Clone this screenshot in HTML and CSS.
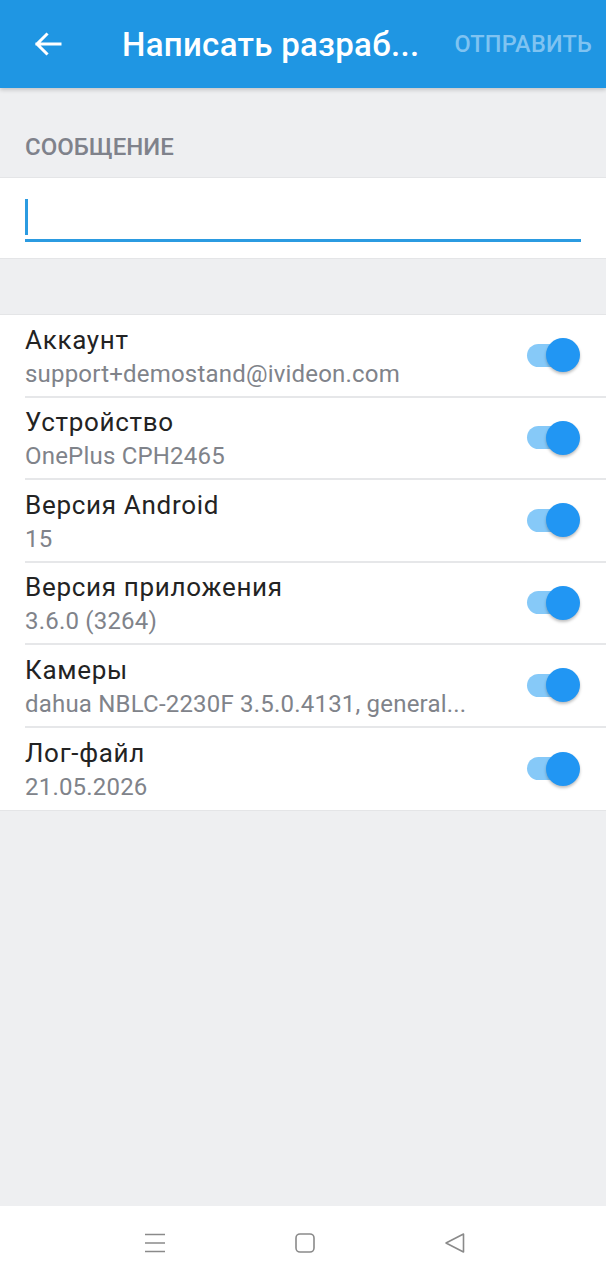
FILE: index.html
```html
<!DOCTYPE html>
<html lang="ru">
<head>
  <meta charset="UTF-8">
  <title>Написать разработчикам</title>
  <link rel="stylesheet" href="styles.css">
</head>
<body>

<div class="screen">
  <div class="toolbar">
    <a class="back" href="#">
      <svg width="28" height="24" viewBox="0 0 28 24">
        <path d="M26 12H3M12.5 2.5L3 12l9.5 9.5" fill="none" stroke="#fff" stroke-width="3" stroke-linecap="square"/>
      </svg>
    </a>
    <div class="title">Написать разраб...</div>
    <a class="send" href="#">ОТПРАВИТЬ</a>
  </div>

  <div class="section-label">СООБЩЕНИЕ</div>

  <div class="message">
    <div class="field">
      <span class="caret"></span>
    </div>
  </div>

  <ul class="options">
    <li>
      <div class="text">
        <div class="name">Аккаунт</div>
        <div class="value">support+demostand@ivideon.com</div>
      </div>
      <span class="switch"></span>
    </li>
    <li>
      <div class="text">
        <div class="name">Устройство</div>
        <div class="value">OnePlus CPH2465</div>
      </div>
      <span class="switch"></span>
    </li>
    <li>
      <div class="text">
        <div class="name">Версия Android</div>
        <div class="value">15</div>
      </div>
      <span class="switch"></span>
    </li>
    <li>
      <div class="text">
        <div class="name">Версия приложения</div>
        <div class="value">3.6.0 (3264)</div>
      </div>
      <span class="switch"></span>
    </li>
    <li>
      <div class="text">
        <div class="name">Камеры</div>
        <div class="value">dahua NBLC-2230F 3.5.0.4131, general...</div>
      </div>
      <span class="switch"></span>
    </li>
    <li>
      <div class="text">
        <div class="name">Лог-файл</div>
        <div class="value">21.05.2026</div>
      </div>
      <span class="switch"></span>
    </li>
  </ul>

  <div class="filler"></div>

  <div class="navbar">
    <svg width="20" height="20" viewBox="0 0 20 20">
      <path d="M0 1.5h20M0 10h20M0 18.5h20" stroke="#8a8a8a" stroke-width="1.6" fill="none"/>
    </svg>
    <svg width="20" height="20" viewBox="0 0 20 20">
      <rect x="1" y="1" width="18" height="18" rx="4" stroke="#8a8a8a" stroke-width="1.6" fill="none"/>
    </svg>
    <svg width="20" height="20" viewBox="0 0 20 20">
      <path d="M18.5 1v18L1 10z" stroke="#8a8a8a" stroke-width="1.6" stroke-linejoin="round" fill="none"/>
    </svg>
  </div>
</div>

</body>
</html>
```

FILE: styles.css
```css
* {
  margin: 0;
  padding: 0;
  list-style: none;
  box-sizing: border-box;
}

body {
  font-family: Roboto, "Noto Sans", sans-serif;
  background-color: #eeeff1;
}

.screen {
  width: 606px;
  height: 1280px;
  display: flex;
  flex-direction: column;
}

/*顶部栏*/
.toolbar {
  height: 88px;
  background-color: #1f96e3;
  display: flex;
  align-items: center;
  box-shadow: 0 2px 4px rgba(0, 0, 0, 0.18);
  position: relative;
  z-index: 1;
}

.toolbar .back {
  display: block;
  width: 28px;
  height: 24px;
  margin-left: 34px;
  margin-right: 60px;
}

.toolbar .back svg {
  display: block;
}

.toolbar .title {
  flex: 1;
  color: #fff;
  font-size: 33px;
  font-weight: 500;
  letter-spacing: 0.3px;
  white-space: nowrap;
}

.toolbar .send {
  color: #7fc3f1;
  font-size: 23.5px;
  font-weight: 500;
  letter-spacing: 0.2px;
  text-decoration: none;
  margin-right: 14px;
}

.section-label {
  height: 89px;
  padding: 44px 25px 0;
  color: #7f828b;
  font-size: 24px;
  font-weight: 500;
  line-height: 30px;
}

/*输入框*/
.message {
  height: 82px;
  background-color: #fff;
  border-top: 1px solid #e4e5e7;
  border-bottom: 1px solid #e4e5e7;
  padding: 21px 25px 0;
}

.field {
  height: 43px;
  border-bottom: 3px solid #2b9be1;
}

.caret {
  display: block;
  width: 3px;
  height: 36px;
  background-color: #2b9be1;
}

.options {
  margin-top: 55px;
  background-color: #fff;
  border-top: 1px solid #e4e5e7;
  border-bottom: 1px solid #e4e5e7;
}

.options li {
  height: 82.5px;
  margin-left: 25px;
  padding: 9px 26px 5px 0;
  display: flex;
  align-items: center;
  border-bottom: 2px solid #e6e7e9;
}

.options li:last-child {
  border-bottom: none;
}

.options .text {
  flex: 1;
  min-width: 0;
}

.options .name {
  color: #232323;
  font-size: 26px;
  letter-spacing: 0.7px;
  line-height: 34px;
}

.options .value {
  color: #80838a;
  font-size: 24px;
  letter-spacing: 0.2px;
  line-height: 35px;
  white-space: nowrap;
}

/*开关*/
.switch {
  width: 53px;
  height: 34px;
  position: relative;
  margin-top: -4px;
}

.switch::before {
  content: "";
  position: absolute;
  left: 0;
  top: 5.5px;
  width: 46px;
  height: 23px;
  border-radius: 12px;
  background-color: #86c9f8;
}

.switch::after {
  content: "";
  position: absolute;
  right: 0;
  top: 0;
  width: 34px;
  height: 34px;
  border-radius: 50%;
  background-color: #2196f3;
  box-shadow: 0 2px 3px rgba(0, 0, 0, 0.25);
}

.filler {
  flex: 1;
}

.navbar {
  height: 74px;
  background-color: #fff;
  display: flex;
  justify-content: center;
  align-items: center;
  gap: 130px;
  padding-left: 4px;
}

.navbar svg {
  display: block;
}
```
